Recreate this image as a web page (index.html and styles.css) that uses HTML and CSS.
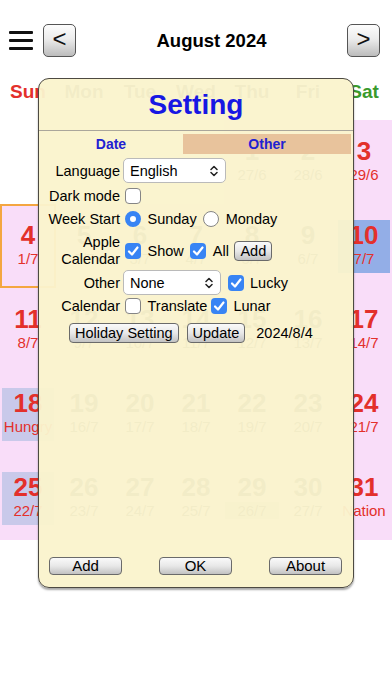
FILE: index.html
```html
<!doctype html>
<html>
<head>
<meta charset="UTF-8" />
<title>Calendar</title>
<link rel="stylesheet" href="styles.css">
</head>
<body>
	<div id="page">
		<div class="top-bar">
			<div class="menu"><span></span><span></span><span></span></div>
			<button class="nav-btn first">&lt;</button>
			<div class="month">August 2024</div>
			<button class="nav-btn">&gt;</button>
		</div>
		<div class="week-head">
			<div class="sun">Sun</div>
			<div>Mon</div>
			<div>Tue</div>
			<div>Wed</div>
			<div>Thu</div>
			<div>Fri</div>
			<div class="sat">Sat</div>
		</div>
		<div class="grid">
			<div class="cell blank"></div>
			<div class="cell blank"></div>
			<div class="cell blank"></div>
			<div class="cell blank"></div>
			<div class="cell"><div class="box"><span class="num">1</span><span class="lun">27/6</span></div></div>
			<div class="cell"><div class="box"><span class="num">2</span><span class="lun">28/6</span></div></div>
			<div class="cell red"><div class="box"><span class="num">3</span><span class="lun">29/6</span></div></div>

			<div class="cell red today"><div class="box"><span class="num">4</span><span class="lun">1/7</span></div></div>
			<div class="cell"><div class="box"><span class="num">5</span><span class="lun">2/7</span></div></div>
			<div class="cell"><div class="box"><span class="num">6</span><span class="lun">3/7</span></div></div>
			<div class="cell"><div class="box"><span class="num">7</span><span class="lun">4/7</span></div></div>
			<div class="cell"><div class="box"><span class="num">8</span><span class="lun">5/7</span></div></div>
			<div class="cell"><div class="box"><span class="num">9</span><span class="lun">6/7</span></div></div>
			<div class="cell red mark-blue"><div class="box"><span class="num">10</span><span class="lun">7/7</span></div></div>

			<div class="cell red"><div class="box"><span class="num">11</span><span class="lun">8/7</span></div></div>
			<div class="cell"><div class="box"><span class="num">12</span><span class="lun">9/7</span></div></div>
			<div class="cell"><div class="box"><span class="num">13</span><span class="lun">10/7</span></div></div>
			<div class="cell"><div class="box"><span class="num">14</span><span class="lun">11/7</span></div></div>
			<div class="cell"><div class="box"><span class="num">15</span><span class="lun">12/7</span></div></div>
			<div class="cell"><div class="box"><span class="num">16</span><span class="lun">13/7</span></div></div>
			<div class="cell red"><div class="box"><span class="num">17</span><span class="lun">14/7</span></div></div>

			<div class="cell red mark"><div class="box"><span class="num">18</span><span class="lun">Hungry</span></div></div>
			<div class="cell"><div class="box"><span class="num">19</span><span class="lun">16/7</span></div></div>
			<div class="cell"><div class="box"><span class="num">20</span><span class="lun">17/7</span></div></div>
			<div class="cell"><div class="box"><span class="num">21</span><span class="lun">18/7</span></div></div>
			<div class="cell"><div class="box"><span class="num">22</span><span class="lun">19/7</span></div></div>
			<div class="cell"><div class="box"><span class="num">23</span><span class="lun">20/7</span></div></div>
			<div class="cell red"><div class="box"><span class="num">24</span><span class="lun">21/7</span></div></div>

			<div class="cell red mark"><div class="box"><span class="num">25</span><span class="lun">22/7</span></div></div>
			<div class="cell"><div class="box"><span class="num">26</span><span class="lun">23/7</span></div></div>
			<div class="cell"><div class="box"><span class="num">27</span><span class="lun">24/7</span></div></div>
			<div class="cell"><div class="box"><span class="num">28</span><span class="lun">25/7</span></div></div>
			<div class="cell"><div class="box"><span class="num">29</span><span class="lun hl">26/7</span></div></div>
			<div class="cell"><div class="box"><span class="num">30</span><span class="lun">27/7</span></div></div>
			<div class="cell red"><div class="box"><span class="num">31</span><span class="lun">Nation</span></div></div>
		</div>

		<div class="dialog">
			<div class="dlg-title">Setting</div>
			<div class="tabs">
				<div class="tab">Date</div>
				<div class="tab other">Other</div>
			</div>

			<div class="row r-lang">
				<div class="lbl">Language</div>
				<div class="ctl">
					<div class="select lang"><span>English</span>
						<svg width="8" height="12" viewBox="0 0 8 12"><path d="M1 4.5 L4 1.5 L7 4.5 M1 7.5 L4 10.5 L7 7.5" fill="none" stroke="#222" stroke-width="1.5" stroke-linecap="round" stroke-linejoin="round"/></svg>
					</div>
				</div>
			</div>
			<div class="row r-dark">
				<div class="lbl">Dark mode</div>
				<div class="ctl"><span class="cb"></span></div>
			</div>
			<div class="row r-week">
				<div class="lbl">Week Start</div>
				<div class="ctl">
					<span class="rd on"></span><span>Sunday</span>
					<span class="rd"></span><span>Monday</span>
				</div>
			</div>
			<div class="row r-apple">
				<div class="lbl two">Apple<br>Calendar</div>
				<div class="ctl">
					<span class="cb on"><svg width="16" height="16" viewBox="0 0 16 16"><polyline points="4,8.5 7,11.5 12.5,4.5" fill="none" stroke="#fff" stroke-width="2.2" stroke-linecap="round" stroke-linejoin="round"/></svg></span><span>Show</span>
					<span class="cb on"><svg width="16" height="16" viewBox="0 0 16 16"><polyline points="4,8.5 7,11.5 12.5,4.5" fill="none" stroke="#fff" stroke-width="2.2" stroke-linecap="round" stroke-linejoin="round"/></svg></span><span>All</span>
					<button class="btn">Add</button>
				</div>
			</div>
			<div class="row r-other1">
				<div class="lbl">Other</div>
				<div class="ctl">
					<div class="select none"><span>None</span>
						<svg width="8" height="12" viewBox="0 0 8 12"><path d="M1 4.5 L4 1.5 L7 4.5 M1 7.5 L4 10.5 L7 7.5" fill="none" stroke="#222" stroke-width="1.5" stroke-linecap="round" stroke-linejoin="round"/></svg>
					</div>
					<span class="cb on"><svg width="16" height="16" viewBox="0 0 16 16"><polyline points="4,8.5 7,11.5 12.5,4.5" fill="none" stroke="#fff" stroke-width="2.2" stroke-linecap="round" stroke-linejoin="round"/></svg></span><span>Lucky</span>
				</div>
			</div>
			<div class="row r-other2">
				<div class="lbl">Calendar</div>
				<div class="ctl">
					<span class="cb"></span><span>Translate</span>
					<span class="cb on tight"><svg width="16" height="16" viewBox="0 0 16 16"><polyline points="4,8.5 7,11.5 12.5,4.5" fill="none" stroke="#fff" stroke-width="2.2" stroke-linecap="round" stroke-linejoin="round"/></svg></span><span>Lunar</span>
				</div>
			</div>
			<div class="row r-btns">
				<button class="btn">Holiday Setting</button>
				<button class="btn update">Update</button>
				<span class="date">2024/8/4</span>
			</div>

			<div class="dlg-foot">
				<button class="btn wide">Add</button>
				<button class="btn wide">OK</button>
				<button class="btn wide">About</button>
			</div>
		</div>
	</div>
</body>
</html>
```

FILE: styles.css
```css
html, body{
	margin:0;
	padding:0;
}
body{
	font-family:"Liberation Sans", Arial, sans-serif;
	background:#fff;
	color:#000;
}
#page{
	position:relative;
	width:392px;
	height:696px;
	overflow:hidden;
}

/* top bar */
.top-bar{
	display:flex;
	align-items:center;
	height:33px;
	margin-top:24px;
	padding:0 12px 0 9px;
}
.menu{
	width:24px;
	display:flex;
	flex-direction:column;
	gap:5px;
}
.menu span{
	display:block;
	height:3px;
	background:#111;
	border-radius:1px;
}
.nav-btn{
	width:33px;
	height:33px;
	padding:0 0 3px;
	border:1px solid #555;
	border-radius:5px;
	background:linear-gradient(#fdfdfd, #ececec 45%, #bcbcbc);
	font:24px "Liberation Sans", Arial, sans-serif;
	color:#111;
}
.nav-btn.first{
	margin-left:10px;
}
.month{
	flex:1;
	text-align:center;
	font-size:18.5px;
	font-weight:bold;
}

/* calendar */
.week-head{
	display:grid;
	grid-template-columns:repeat(7, 56px);
	padding:23px 0 16px;
	line-height:24px;
	font-size:19px;
	font-weight:bold;
	text-align:center;
	color:#444;
}
.week-head .sun{
	color:#e3302b;
}
.week-head .sat{
	color:#3a9a2c;
}
.grid{
	display:grid;
	grid-template-columns:repeat(7, 56px);
	grid-auto-rows:84px;
}
.cell{
	background:#f9ddf9;
	box-sizing:border-box;
	color:#444;
}
.cell.blank{
	background:#fff;
}
.box{
	margin:16px 2px 0;
	height:53px;
	padding-top:1px;
	box-sizing:border-box;
	display:flex;
	flex-direction:column;
	align-items:center;
}
.num{
	font-size:26px;
	font-weight:bold;
	line-height:28px;
}
.lun{
	margin-top:1px;
	font-size:15px;
	line-height:17px;
	white-space:nowrap;
}
.lun.hl{
	width:54px;
	text-align:center;
	background:#d0d0d0;
}
.red .num, .red .lun{
	color:#e3302b;
}
.today{
	border:2px solid #f4a641;
}
.today .box{
	margin:14px 0 0;
}
.mark .box{
	background:#c9c9ea;
}
.mark-blue .box{
	background:#93aee7;
}

/* settings dialog */
.dialog{
	position:absolute;
	left:38px;
	top:78px;
	width:316px;
	height:510px;
	box-sizing:border-box;
	border:1px solid #4d4a42;
	border-radius:11px;
	background:rgba(250, 243, 205, 0.955);
	box-shadow:0 2px 2px rgba(0, 0, 0, 0.35);
	display:flex;
	flex-direction:column;
	font-size:14.5px;
}
.dlg-title{
	height:51px;
	line-height:51px;
	text-align:center;
	font-size:28px;
	font-weight:bold;
	color:#1717e3;
	border-bottom:1px solid #aaa69b;
}
.tabs{
	display:flex;
	height:20px;
	margin:3px 2px 0 0;
	line-height:20px;
	font-size:14px;
	font-weight:bold;
	color:#2121d2;
}
.tab{
	flex:0 0 144px;
	text-align:center;
}
.tab.other{
	flex:1;
	background:#e8c39c;
}
.row{
	display:flex;
	align-items:center;
}
.lbl{
	flex:none;
	width:81px;
	margin-right:3px;
	text-align:right;
}
.lbl.two{
	line-height:17px;
}
.ctl{
	display:flex;
	align-items:center;
	gap:6.5px;
	padding-left:2px;
}
.r-lang{
	margin-top:4px;
	height:25px;
}
.r-dark{
	margin-top:2px;
	height:22px;
}
.r-week{
	margin-top:1px;
	height:22px;
}
.r-apple{
	margin-top:3px;
	height:35px;
}
.r-other1{
	margin-top:2px;
	height:25px;
}
.r-other2{
	margin-top:1px;
	height:20px;
}
.r-btns{
	margin-top:7px;
	height:20px;
	padding-left:30px;
}
.select{
	height:25px;
	box-sizing:border-box;
	margin-left:-2px;
	padding:0 7px 0 6px;
	border:1px solid #bababa;
	border-radius:5px;
	background:#fff;
	display:flex;
	align-items:center;
	justify-content:space-between;
}
.select.lang{
	width:103px;
}
.select.none{
	width:98px;
}
.select svg{
	display:block;
}
.cb, .rd{
	flex:none;
	width:16px;
	height:16px;
	box-sizing:border-box;
	border:1px solid #858585;
	background:#fff;
}
.cb{
	border-radius:4px;
}
.cb.on{
	border:none;
	background:#3884f4;
}
.cb svg{
	display:block;
}
.cb.tight{
	margin-left:-3px;
}
.rd{
	border-radius:50%;
}
.rd.on{
	border:5px solid #3884f4;
	background:#fff;
}
.btn{
	height:20px;
	padding:0 5px;
	border:1px solid #6a6a6a;
	border-radius:4px;
	background:linear-gradient(#fafafa, #e8e8e8 50%, #c2c2c2);
	font:14.5px "Liberation Sans", Arial, sans-serif;
	color:#000;
	line-height:18px;
}
.r-apple .btn{
	margin-left:-1px;
}
.btn.update{
	margin-left:8px;
}
.date{
	margin-left:11px;
}
.dlg-foot{
	margin-top:auto;
	display:flex;
	justify-content:space-between;
	padding:0 11px 12px 10px;
}
.btn.wide{
	width:73px;
	height:18px;
	padding:0;
	font-size:15px;
	line-height:16px;
}
```
